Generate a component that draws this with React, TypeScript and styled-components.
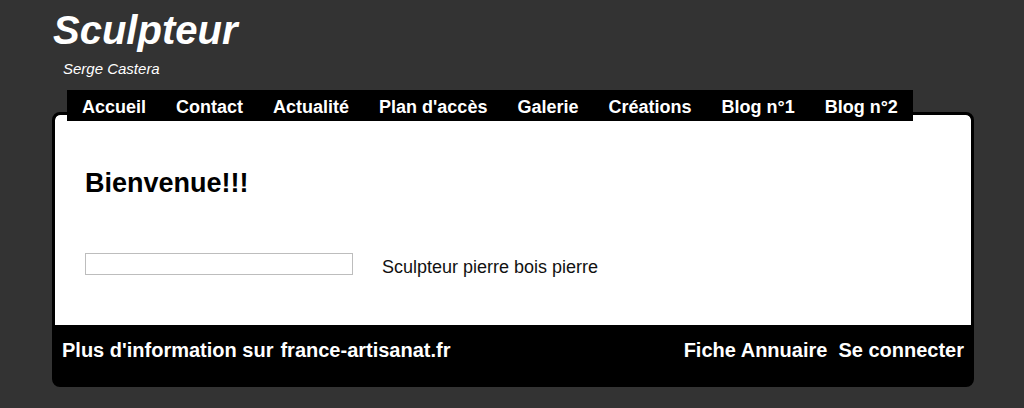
import styled, { createGlobalStyle } from "styled-components"

const GlobalStyle = createGlobalStyle`
    html, body {
        margin: 0;
        padding: 0;
        background-color: #333333;
        font-family: "Liberation Sans", Arial, sans-serif;
    }
`

const Page = styled.div`
    width: 922px;
    margin-left: 52px;
    padding-top: 7px;
`

const Header = styled.header`
    display: flex;
    flex-direction: column;
`

const Title = styled.h1`
    margin: 0 0 0 1px;
    font-size: 40px;
    font-weight: bold;
    font-style: italic;
    line-height: 46px;
    color: #ffffff;
`

const Subtitle = styled.p`
    margin: 7px 0 0 11px;
    font-size: 15px;
    font-style: italic;
    line-height: 17px;
    color: #ffffff;
`

const Nav = styled.nav`
    position: relative;
    z-index: 1;
    display: flex;
    align-self: flex-start;
    margin: 13px 0 0 15px;
    padding: 7px 0 3px;
    background-color: #000000;
`

const NavLink = styled.a`
    padding: 0 15px;
    font-size: 18px;
    font-weight: bold;
    line-height: 21px;
    color: #ffffff;
    text-decoration: none;
`

const Box = styled.main`
    margin-top: -9px;
    border: 3px solid #000000;
    border-radius: 8px;
    background-color: #000000;
    overflow: hidden;
`

const Content = styled.section`
    height: 210px;
    box-sizing: border-box;
    padding: 53px 30px 0;
    background-color: #ffffff;
    border-radius: 5px 5px 0 0;
`

const Heading = styled.h2`
    margin: 0;
    font-size: 27px;
    font-weight: bold;
    line-height: 31px;
    color: #000000;
`

const Row = styled.div`
    display: flex;
    align-items: flex-start;
    gap: 29px;
    margin-top: 54px;
`

const Field = styled.input`
    width: 268px;
    height: 22px;
    box-sizing: border-box;
    margin: 0;
    border: 1px solid #bdbdbd;
    background: #ffffff;
`

const Text = styled.p`
    margin: 4px 0 0;
    font-size: 18px;
    line-height: 21px;
    color: #111111;
`

const Footer = styled.footer`
    display: flex;
    justify-content: space-between;
    height: 59px;
    box-sizing: border-box;
    padding: 14px 7px 0;
`

const FooterGroup = styled.div<{ $gap: number }>`
    display: flex;
    gap: ${(p) => p.$gap}px;
`

const FooterLink = styled.a`
    font-size: 20px;
    font-weight: bold;
    line-height: 23px;
    color: #ffffff;
    text-decoration: none;
`

const links = ["Accueil", "Contact", "Actualité", "Plan d'accès", "Galerie", "Créations", "Blog n°1", "Blog n°2"]

const App = (): JSX.Element => {
    return (
        <>
            <GlobalStyle />
            <Page>
                <Header>
                    <Title>Sculpteur</Title>
                    <Subtitle>Serge Castera</Subtitle>
                    <Nav>
                        {links.map((l) => (
                            <NavLink key={l} href="#">{l}</NavLink>
                        ))}
                    </Nav>
                </Header>
                <Box>
                    <Content>
                        <Heading>Bienvenue!!!</Heading>
                        <Row>
                            <Field type="text" />
                            <Text>Sculpteur pierre bois pierre</Text>
                        </Row>
                    </Content>
                    <Footer>
                        <FooterGroup $gap={7}>
                            <FooterLink as="span">Plus d'information sur</FooterLink>
                            <FooterLink href="#">france-artisanat.fr</FooterLink>
                        </FooterGroup>
                        <FooterGroup $gap={11}>
                            <FooterLink href="#">Fiche Annuaire</FooterLink>
                            <FooterLink href="#">Se connecter</FooterLink>
                        </FooterGroup>
                    </Footer>
                </Box>
            </Page>
        </>
    )
}

export default App
